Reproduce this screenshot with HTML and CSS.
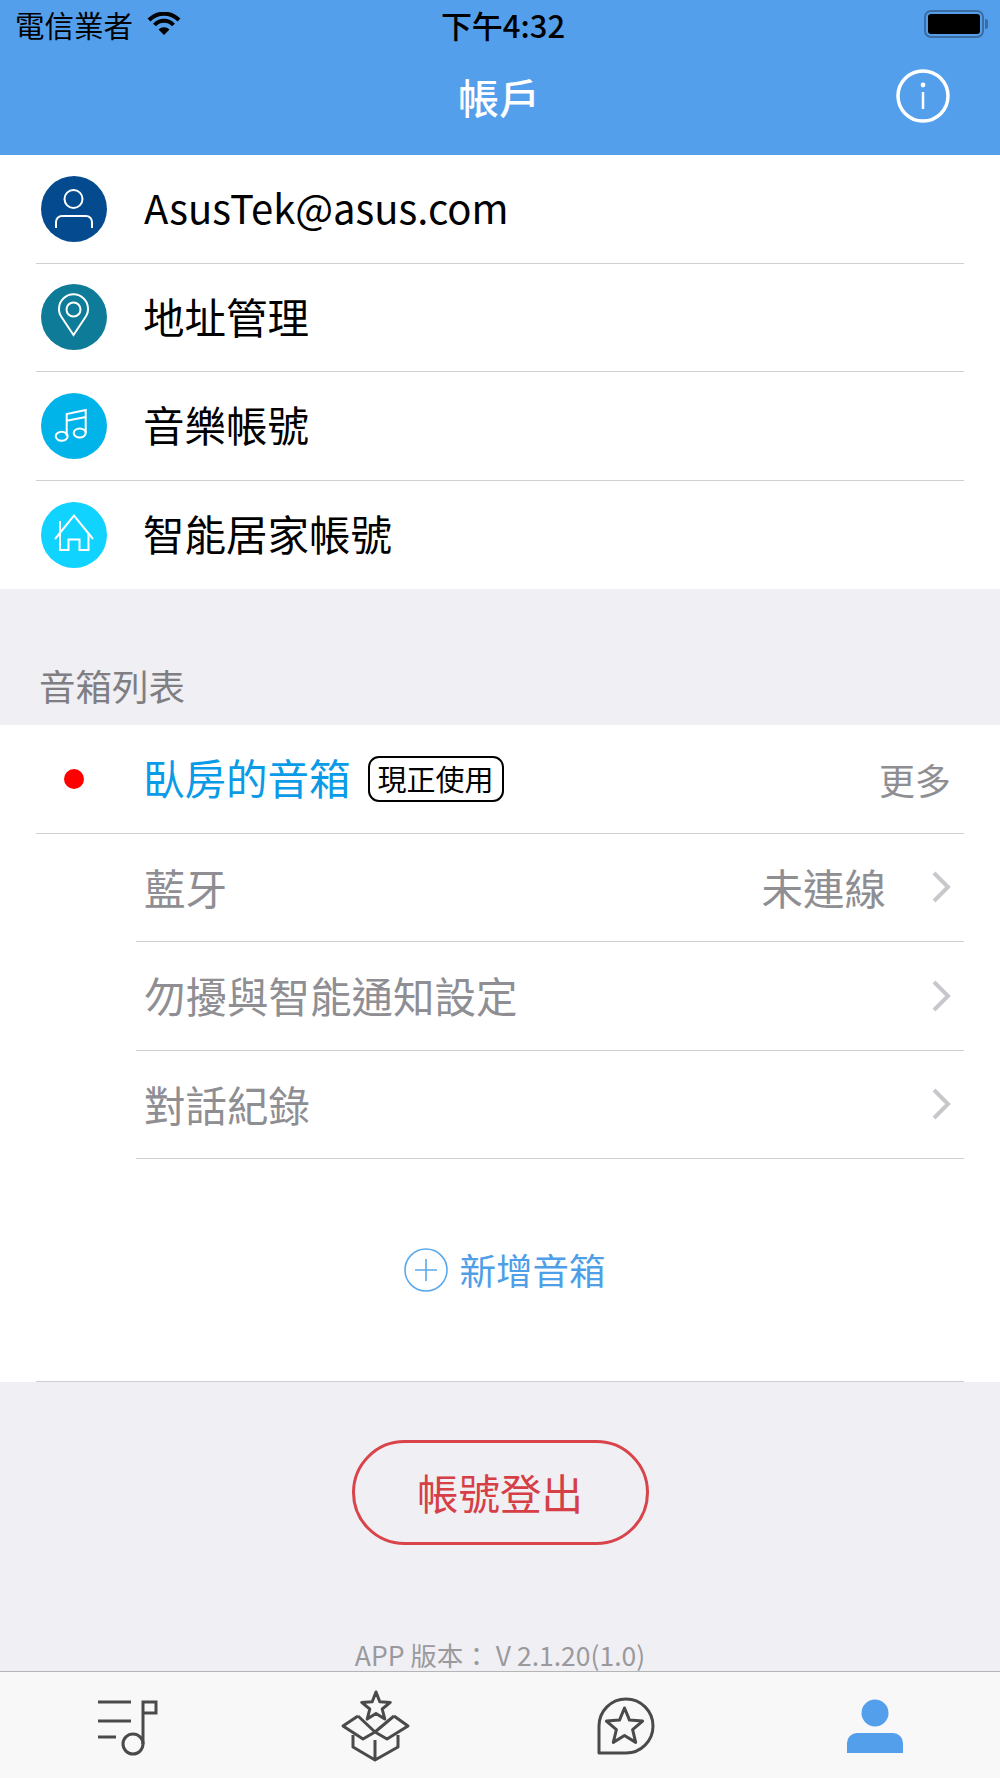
FILE: index.html
```html
<!DOCTYPE html>
<html>
<head>
    <meta name="viewport" content="width=device-width, initial-scale=1">
    <link rel="stylesheet" href="styles.css">
</head>
<body>
<header class="top">
    <div class="status">
        <div class="carrier">電信業者
            <svg class="wifi" width="34" height="24" viewBox="0 0 34 24"><path d="M2 8A21 21 0 0 1 32 8M7.5 13A13 13 0 0 1 26.5 13" fill="none" stroke="#000" stroke-width="4"/><path d="M17 23L11.5 17.5A8 8 0 0 1 22.5 17.5Z"/></svg>
        </div>
        <div class="time">下午4:32</div>
        <div class="battery-wrap"><div class="battery"><div class="battery-fill"></div></div><div class="nub"></div></div>
    </div>
    <div class="nav">
        <div class="nav-title">帳戶</div>
        <svg class="info" width="54" height="54" viewBox="0 0 54 54"><circle cx="27" cy="27" r="25" fill="none" stroke="#fff" stroke-width="3.5"/><circle cx="27" cy="16" r="2.4" fill="#fff"/><path d="M27 23V40" stroke="#fff" stroke-width="2.5"/></svg>
    </div>
</header>

<section class="list">
    <div class="row">
        <svg class="round" width="66" height="66" viewBox="0 0 66 66"><circle cx="33" cy="33" r="33" fill="#034a8f"/><g fill="none" stroke="#fff" stroke-width="2"><circle cx="32.5" cy="23" r="9"/><path d="M15 52V46A6 6 0 0 1 21 40H45A6 6 0 0 1 51 46V52"/></g></svg>
        <span class="label label-latin">AsusTek@asus.com</span>
    </div>
    <div class="row">
        <svg class="round" width="66" height="66" viewBox="0 0 66 66"><circle cx="33" cy="33" r="33" fill="#0e7c99"/><g fill="none" stroke="#fff" stroke-width="2"><circle cx="32.5" cy="25.5" r="7"/><path d="M32.5 51L20.5 33A14.5 14.5 0 1 1 44.5 33Z"/></g></svg>
        <span class="label">地址管理</span>
    </div>
    <div class="row">
        <svg class="round" width="66" height="66" viewBox="0 0 66 66"><circle cx="33" cy="33" r="33" fill="#00b3e8"/><g fill="none" stroke="#fff" stroke-width="2"><ellipse cx="20.7" cy="43.3" rx="6" ry="4.5"/><ellipse cx="38.7" cy="40" rx="6" ry="4.5"/><path d="M25.7 43V21L44.7 17V40M25.7 27.7L44.7 24"/></g></svg>
        <span class="label">音樂帳號</span>
    </div>
    <div class="row row-last">
        <svg class="round" width="66" height="66" viewBox="0 0 66 66"><circle cx="33" cy="33" r="33" fill="#10d3ff"/><g fill="none" stroke="#fff" stroke-width="2"><path d="M14 37L33 13.5L52 37"/><path d="M19 19V48H27.5V37.5H38.5V48H47.5V31"/></g></svg>
        <span class="label">智能居家帳號</span>
    </div>
</section>

<div class="section-head">音箱列表</div>

<section class="list speakers">
    <div class="row">
        <span class="dot"></span>
        <span class="label label-blue">臥房的音箱</span>
        <span class="badge">現正使用</span>
        <span class="more">更多</span>
    </div>
    <div class="row row-sub">
        <span class="label label-gray">藍牙</span>
        <span class="value">未連線</span>
        <svg class="chev" width="20" height="32" viewBox="0 0 20 32"><path d="M3 2L17 16L3 30" fill="none" stroke="#c7c7cc" stroke-width="4"/></svg>
    </div>
    <div class="row row-sub">
        <span class="label label-gray">勿擾與智能通知設定</span>
        <svg class="chev" width="20" height="32" viewBox="0 0 20 32"><path d="M3 2L17 16L3 30" fill="none" stroke="#c7c7cc" stroke-width="4"/></svg>
    </div>
    <div class="row row-sub">
        <span class="label label-gray">對話紀錄</span>
        <svg class="chev" width="20" height="32" viewBox="0 0 20 32"><path d="M3 2L17 16L3 30" fill="none" stroke="#c7c7cc" stroke-width="4"/></svg>
    </div>
    <div class="add-row">
        <svg width="44" height="44" viewBox="0 0 44 44"><circle cx="22" cy="22" r="21" fill="none" stroke="#5aa9ea" stroke-width="1.6"/><path d="M22 11V33M11 22H33" stroke="#5aa9ea" stroke-width="1.6"/></svg>
        <span class="add-text">新增音箱</span>
    </div>
</section>

<section class="foot">
    <div class="logout">帳號登出</div>
    <div class="version">APP 版本： V 2.1.20(1.0)</div>
</section>

<nav class="tabs">
    <div class="tab">
        <svg width="80" height="80" viewBox="0 0 80 80" fill="none" stroke="#4a4a4a" stroke-width="3"><path d="M13 17H46M13 36H46M13 52H31"/><circle cx="48" cy="59" r="10"/><path d="M58 59V17H71V28H58"/></svg>
    </div>
    <div class="tab">
        <svg width="80" height="80" viewBox="0 0 80 80" fill="none" stroke="#4a4a4a" stroke-width="3" stroke-linejoin="round"><path d="M41 7L44.8 16.7L55.3 17.4L47.2 24L49.8 34.1L41 28.5L32.2 34.1L34.8 24L26.7 17.4L37.2 16.7Z"/><path d="M23 31L8 41L28 54L40 47L52 54L73 41L59 31M23 31L40 47L59 31"/><path d="M18 50V62L40 75L63 62V50M40 55V75"/></svg>
    </div>
    <div class="tab">
        <svg width="80" height="80" viewBox="0 0 80 80" fill="none" stroke="#4a4a4a" stroke-width="3" stroke-linejoin="round"><path d="M14 68V41A27 27 0 1 1 41 68Z"/><path d="M39.5 23L44.5 35.1L57.6 36.1L47.6 44.6L50.7 57.4L39.5 50.5L28.3 57.4L31.4 44.6L21.4 36.1L34.5 35.1Z"/></svg>
    </div>
    <div class="tab">
        <svg width="80" height="80" viewBox="0 0 80 80" fill="#549fec"><circle cx="40" cy="28" r="13.5"/><path d="M12 68V58A10 10 0 0 1 22 48H58A10 10 0 0 1 68 58V68Z"/></svg>
    </div>
</nav>
</body>
</html>
```

FILE: styles.css
```css
* {
    box-sizing: border-box;
}

body {
    margin: 0;
    width: 1000px;
    height: 1778px;
    overflow: hidden;
    background: #efeff4;
    font-family: "Noto Sans CJK TC", "Noto Sans", sans-serif;
    color: #000;
}

.top {
    height: 155px;
    background: #549fec;
}

.status {
    height: 48px;
    display: grid;
    grid-template-columns: 1fr auto 1fr;
    align-items: center;
    padding: 0 12px 0 15px;
    font-size: 29.5px;
}

.carrier {
    display: flex;
    align-items: center;
    gap: 14px;
}

.time {
    margin-left: 3px;
    font-size: 31px;
    font-weight: 500;
}

.battery-wrap {
    display: flex;
    align-items: center;
    justify-content: flex-end;
    gap: 1px;
}

.battery {
    width: 60px;
    height: 28px;
    border: 2.5px solid #3b6da3;
    border-radius: 7px;
    padding: 2px;
}

.battery-fill {
    height: 100%;
    background: #000;
    border-radius: 3px;
}

.nub {
    width: 3px;
    height: 10px;
    background: #3b6da3;
    border-radius: 0 2px 2px 0;
}

.nav {
    height: 107px;
    display: flex;
    align-items: center;
    justify-content: flex-end;
    padding: 0 50px 12px 0;
    position: relative;
}

.nav-title {
    position: absolute;
    left: 0;
    right: 2px;
    top: 20px;
    text-align: center;
    color: #fff;
    font-size: 41px;
    line-height: 56px;
    font-weight: 500;
}

.list {
    background: #fff;
}

.row {
    height: 108.5px;
    margin: 0 36px;
    padding: 0 13px 0 5px;
    border-bottom: 1px solid #cfcfd2;
    display: flex;
    align-items: center;
}

.row-last {
    border-bottom: 0;
}

.round {
    margin-right: 36px;
    flex: none;
}

.label {
    font-size: 41.5px;
    line-height: 56px;
    margin-top: -3px;
}

.label-latin {
    margin-left: 1px;
    font-size: 40px;
}

.section-head {
    height: 136px;
    padding: 0 0 14px 39px;
    display: flex;
    align-items: flex-end;
    font-size: 36.5px;
    line-height: 50px;
    color: #7f7f83;
}

.dot {
    width: 20px;
    height: 20px;
    border-radius: 50%;
    background: #ff0000;
    margin: 0 59px 0 23px;
    flex: none;
}

.label-blue {
    color: #0a9be8;
}

.label-gray {
    color: #8e8e93;
    margin-top: -1px;
}

.badge {
    margin-left: 17px;
    width: 136px;
    height: 46px;
    border: 2.5px solid #000;
    border-radius: 11px;
    font-size: 29px;
    line-height: 40px;
    text-align: center;
}

.more {
    margin-left: auto;
    font-size: 36px;
    color: #8e8e93;
}

.row-sub {
    margin-left: 136px;
    padding: 0 13px 0 8px;
}

.value {
    margin-left: auto;
    font-size: 41.5px;
    line-height: 56px;
    color: #8e8e93;
}

.chev {
    margin-left: 45px;
}

.row-sub .label + .chev {
    margin-left: auto;
}

.add-row {
    height: 223px;
    margin: 0 36px;
    padding-left: 9px;
    border-bottom: 1px solid #cfcfd2;
    display: flex;
    align-items: center;
    justify-content: center;
    gap: 12px;
}

.add-text {
    font-size: 36.5px;
    line-height: 50px;
    color: #4f9fe8;
}

.foot {
    height: 289px;
    padding-top: 58px;
    display: flex;
    flex-direction: column;
    align-items: center;
    justify-content: space-between;
}

.logout {
    width: 297px;
    height: 105px;
    border: 3px solid #d9434a;
    border-radius: 53px;
    color: #d63f46;
    font-size: 41.5px;
    line-height: 99px;
    text-align: center;
}

.version {
    font-size: 26.5px;
    line-height: 32px;
    color: #9a9a9e;
}

.tabs {
    height: 107px;
    border-top: 1.5px solid #b5b5b5;
    background: #f8f8f8;
    display: grid;
    grid-template-columns: repeat(4, 1fr);
}

.tab {
    display: flex;
    align-items: center;
    justify-content: center;
}
```
